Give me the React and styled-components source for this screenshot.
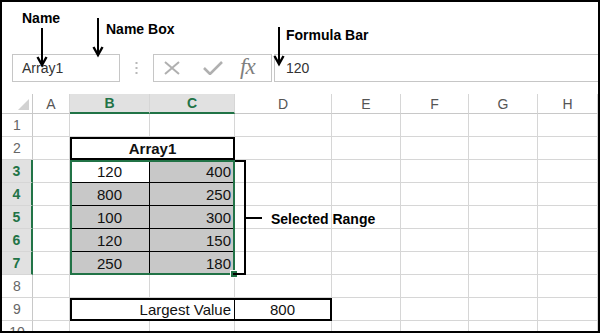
import React from 'react'
import styled, { createGlobalStyle } from 'styled-components'

const GlobalStyle = createGlobalStyle`
  html, body {
    margin: 0;
    padding: 0;
    background: #fff;
  }
`

const GREEN = '#217346'
const GRID = '#d6d6d6'

const Frame = styled.div`
  position: relative;
  width: 600px;
  height: 333px;
  box-sizing: border-box;
  border: 2px solid #000;
  overflow: hidden;
  display: flex;
  flex-direction: column;
  background: #fff;
  font-family: "Liberation Sans", Arial, sans-serif;
  color: #222;
`

const TopSpace = styled.div`
  height: 52px;
  flex-shrink: 0;
`

const Label = styled.div`
  position: absolute;
  top: ${p => p.$top}px;
  left: ${p => p.$left}px;
  font-size: 14px;
  line-height: 16px;
  font-weight: bold;
  color: #000;
  white-space: nowrap;
  z-index: 3;
`

const ArrowSvg = styled.svg`
  position: absolute;
  top: ${p => p.$top}px;
  left: ${p => p.$left}px;
  z-index: 3;
  overflow: visible;
`

const Arrow = ({ top, left, height }) => (
  <ArrowSvg $top={top} $left={left} width="12" height={height} viewBox={`0 0 12 ${height}`}>
    <line x1="6" y1="0" x2="6" y2={height - 1} stroke="#000" strokeWidth="2" />
    <polyline
      points={`1.5,${height - 9} 6,${height - 1} 10.5,${height - 9}`}
      fill="none"
      stroke="#000"
      strokeWidth="2.4"
    />
  </ArrowSvg>
)

const Toolbar = styled.div`
  display: flex;
  height: 28px;
  flex-shrink: 0;
  padding-left: 10px;
`

const NameBox = styled.div`
  width: 108px;
  box-sizing: border-box;
  border: 1px solid #c6c6c6;
  padding-left: 9px;
  display: flex;
  align-items: center;
  font-size: 14px;
  color: #333;
`

const Separator = styled.div`
  width: 33px;
  display: flex;
  align-items: center;
  justify-content: center;
`

const FxBox = styled.div`
  width: 119px;
  box-sizing: border-box;
  border: 1px solid #c6c6c6;
  display: flex;
  align-items: center;
  padding-left: 9px;
`

const Fx = styled.span`
  margin-left: 17px;
  font-family: "Liberation Serif", "Times New Roman", serif;
  font-style: italic;
  font-size: 23px;
  color: #7f7f7f;
  letter-spacing: -1px;
  line-height: 1;
  margin-top: -3px;
`

const FormulaBox = styled.div`
  flex: 1;
  margin-left: 2px;
  border: 1px solid #c6c6c6;
  border-right: none;
  padding-left: 11px;
  display: flex;
  align-items: center;
  font-size: 14px;
  color: #333;
`

const Sheet = styled.div`
  margin-top: 12px;
  display: grid;
  grid-template-columns: 31px 37px 80px 85px 97px 69px 68px 69px 1fr;
  grid-template-rows: 20px repeat(10, 23px);
  font-size: 14px;
`

const Placed = styled.div`
  grid-row: ${p => p.$row};
  grid-column: ${p => p.$col};
  box-sizing: border-box;
  min-width: 0;
`

const Corner = styled(Placed)`
  border-right: 1px solid #c8c8c8;
  border-bottom: 1px solid #c8c8c8;
  display: flex;
  justify-content: flex-end;
  align-items: flex-end;
  padding: 0 3px 3px 0;
`

const Triangle = styled.span`
  width: 0;
  height: 0;
  border-left: 11px solid transparent;
  border-bottom: 11px solid #d2d2d2;
`

const ColHead = styled(Placed)`
  display: flex;
  align-items: center;
  justify-content: center;
  border-right: 1px solid ${GRID};
  border-bottom: ${p => (p.$active ? `2px solid ${GREEN}` : '1px solid #c8c8c8')};
  background: ${p => (p.$active ? '#e1e1e1' : '#fff')};
  color: ${p => (p.$active ? GREEN : '#555')};
  font-weight: ${p => (p.$active ? 'bold' : 'normal')};
`

const RowHead = styled(Placed)`
  display: flex;
  align-items: center;
  justify-content: center;
  border-bottom: 1px solid ${GRID};
  border-right: ${p => (p.$active ? `2px solid ${GREEN}` : '1px solid #c8c8c8')};
  background: ${p => (p.$active ? '#e1e1e1' : '#fff')};
  color: ${p => (p.$active ? GREEN : '#666')};
  font-weight: ${p => (p.$active ? 'bold' : 'normal')};
`

const Cell = styled(Placed)`
  border-right: 1px solid ${GRID};
  border-bottom: 1px solid ${GRID};
`

const TitleCell = styled(Placed)`
  border: 2px solid #000;
  display: flex;
  align-items: center;
  justify-content: center;
  font-size: 15px;
  font-weight: bold;
  color: #111;
`

const DataCell = styled(Placed)`
  display: flex;
  align-items: center;
  justify-content: ${p => (p.$right ? 'flex-end' : 'center')};
  padding-right: ${p => (p.$right ? '4px' : '0')};
  background: ${p => (p.$white ? '#fff' : '#c8c8c8')};
  border-bottom: 1px solid #000;
  border-right: ${p => (p.$right ? 'none' : '1px solid #000')};
  font-size: 15px;
  color: #111;
`

const ResultCell = styled(Placed)`
  display: flex;
  align-items: center;
  justify-content: ${p => (p.$right ? 'flex-end' : 'center')};
  padding-right: ${p => (p.$right ? '3px' : '0')};
  border-top: 2px solid #000;
  border-bottom: 2px solid #000;
  border-left: ${p => (p.$right ? '2px solid #000' : 'none')};
  border-right: ${p => (p.$right ? '1px solid #000' : '2px solid #000')};
  font-size: 15px;
  color: #111;
`

const Selection = styled(Placed)`
  position: relative;
  border: 2px solid ${GREEN};
  z-index: 2;
  pointer-events: none;
`

const FillHandle = styled.span`
  position: absolute;
  right: -5px;
  bottom: -5px;
  width: 6px;
  height: 6px;
  background: ${GREEN};
  border: 1px solid #fff;
`

const Callout = styled(Placed)`
  display: flex;
  align-items: center;
  margin-left: -2px;
  z-index: 3;
  pointer-events: none;
`

const CalloutText = styled.span`
  margin-left: 8px;
  margin-top: 2px;
  font-weight: bold;
  color: #000;
  white-space: nowrap;
`

const columns = ['A', 'B', 'C', 'D', 'E', 'F', 'G', 'H']
const colB = [120, 800, 100, 120, 250]
const colC = [400, 250, 300, 150, 180]

const renderRow = r => {
  const row = r + 1
  const cells = [
    <RowHead key={`h${r}`} $row={row} $col={1} $active={r >= 3 && r <= 7}>
      {r}
    </RowHead>,
  ]
  columns.forEach((c, i) => {
    const col = i + 2
    const key = `${c}${r}`
    if (r === 2 && c === 'B') {
      cells.push(<TitleCell key={key} $row={row} $col="3 / 5">Array1</TitleCell>)
    } else if (r === 2 && c === 'C') {
      // merged into B2
    } else if (r >= 3 && r <= 7 && c === 'B') {
      cells.push(
        <DataCell key={key} $row={row} $col={col} $white={r === 3}>
          {colB[r - 3]}
        </DataCell>
      )
    } else if (r >= 3 && r <= 7 && c === 'C') {
      cells.push(
        <DataCell key={key} $row={row} $col={col} $right>
          {colC[r - 3]}
        </DataCell>
      )
    } else if (r === 9 && c === 'B') {
      cells.push(
        <ResultCell key={key} $row={row} $col="3 / 5" $right>
          Largest Value
        </ResultCell>
      )
    } else if (r === 9 && c === 'C') {
      // merged
    } else if (r === 9 && c === 'D') {
      cells.push(<ResultCell key={key} $row={row} $col={col}>800</ResultCell>)
    } else {
      cells.push(<Cell key={key} $row={row} $col={col} />)
    }
  })
  return cells
}

const App = () => {
  return (
    <>
      <GlobalStyle />
      <Frame>
        <Label $top={8} $left={20}>Name</Label>
        <Label $top={19} $left={104}>Name Box</Label>
        <Label $top={25} $left={284}>Formula Bar</Label>
        <Arrow top={26} left={34} height={38} />
        <Arrow top={16} left={90} height={38} />
        <Arrow top={25} left={271} height={38} />

        <TopSpace />
        <Toolbar>
          <NameBox>Array1</NameBox>
          <Separator>
            <svg width="3" height="14" viewBox="0 0 3 14">
              <rect x="0.5" y="1" width="2" height="2" fill="#b8b8b8" />
              <rect x="0.5" y="6" width="2" height="2" fill="#b8b8b8" />
              <rect x="0.5" y="11" width="2" height="2" fill="#b8b8b8" />
            </svg>
          </Separator>
          <FxBox>
            <svg width="18" height="14" viewBox="0 0 18 14">
              <path d="M2 1 L16 13 M16 1 L2 13" stroke="#b0b0b0" strokeWidth="2" fill="none" />
            </svg>
            <svg width="20" height="14" viewBox="0 0 20 14" style={{ marginLeft: 22 }}>
              <path d="M1 7 L7 13 L19 1" stroke="#b0b0b0" strokeWidth="2.6" fill="none" />
            </svg>
            <Fx>fx</Fx>
          </FxBox>
          <FormulaBox>120</FormulaBox>
        </Toolbar>

        <Sheet>
          <Corner $row={1} $col={1}>
            <Triangle />
          </Corner>
          {columns.map((c, i) => (
            <ColHead key={c} $row={1} $col={i + 2} $active={c === 'B' || c === 'C'}>
              {c}
            </ColHead>
          ))}
          {Array.from({ length: 10 }, (_, i) => renderRow(i + 1))}
          <Selection $row="4 / 9" $col="3 / 5">
            <FillHandle />
          </Selection>
          <Callout $row="4 / 9" $col="5 / 8">
            <svg width="30" height="115" viewBox="0 0 30 115">
              <path
                d="M2 1 H12 V114 H0 M12 58 H29"
                stroke="#000"
                strokeWidth="2"
                fill="none"
              />
            </svg>
            <CalloutText>Selected Range</CalloutText>
          </Callout>
        </Sheet>
      </Frame>
    </>
  )
}

export default App
